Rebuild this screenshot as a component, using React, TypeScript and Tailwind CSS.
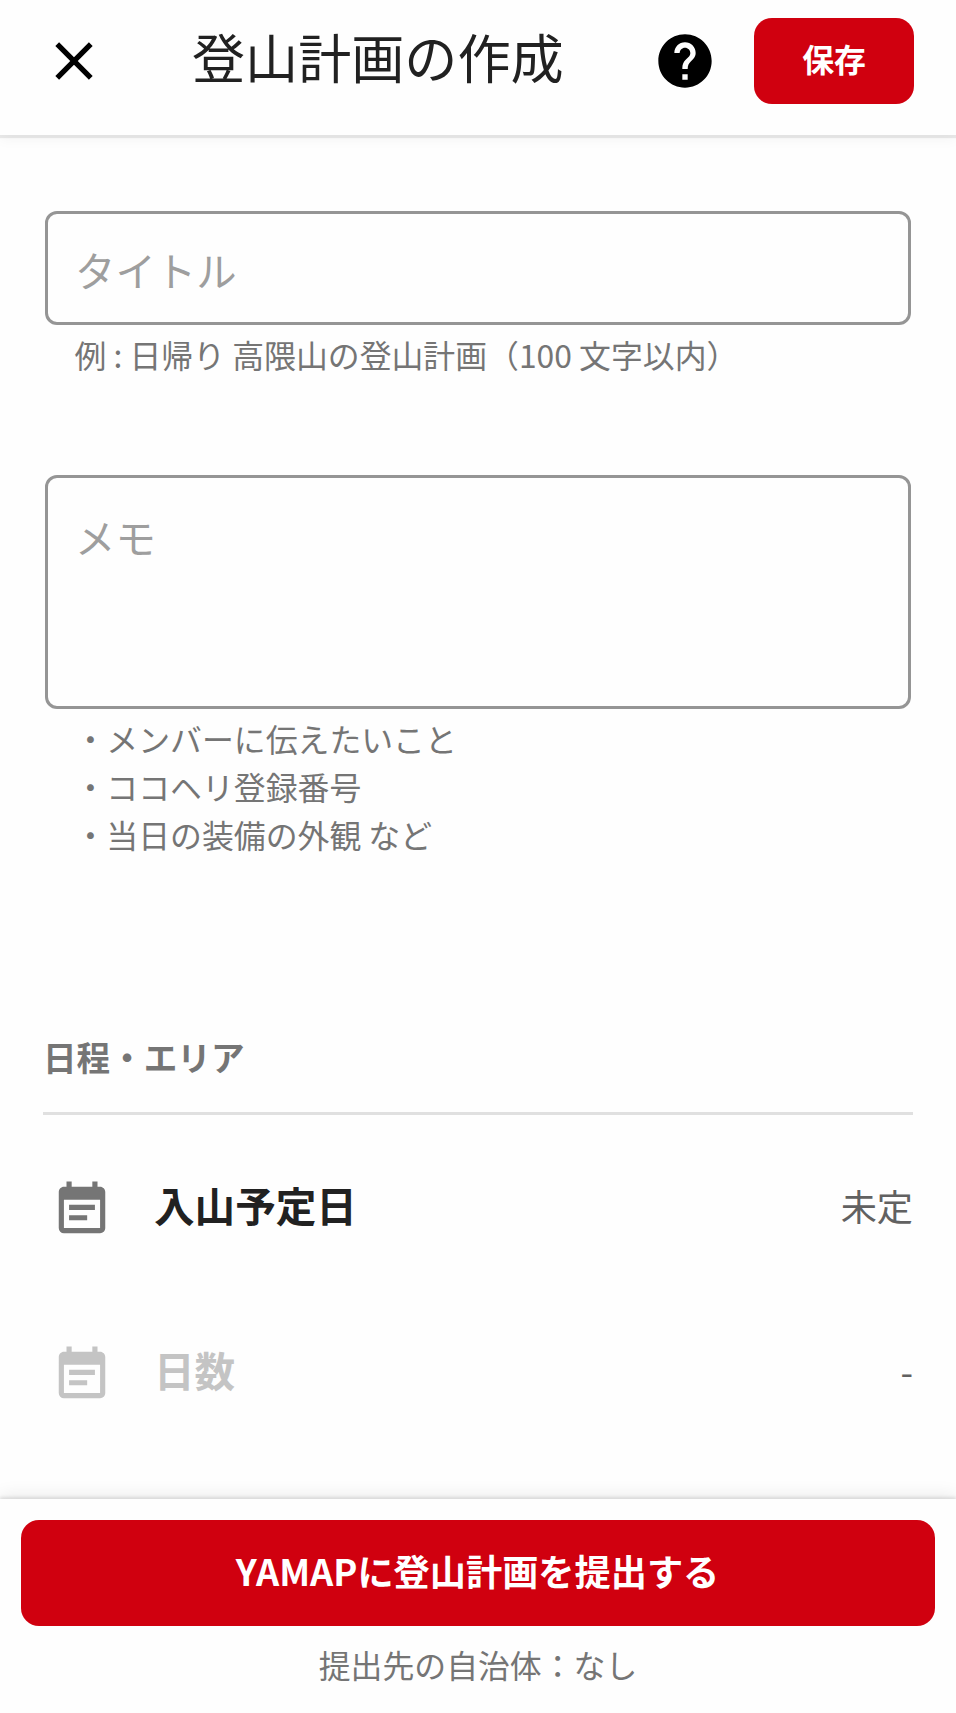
import React, { useState } from "react";
import { MdClose, MdEventNote, MdHelp } from "react-icons/md";

interface ScheduleRowProps {
  label: string;
  value: string;
  disabled?: boolean;
}

const ScheduleRow = ({ label, value, disabled }: ScheduleRowProps) => {
  return (
    <li className="flex h-[165px] items-center pl-[8px]">
      <MdEventNote
        className={
          disabled ? "size-[62px] text-[#c4c4c4]" : "size-[62px] text-[#757575]"
        }
      />
      <span
        className={
          disabled
            ? "ml-[41px] pb-[9px] text-[40.6px] leading-[60px] font-bold text-[#c4c4c4]"
            : "ml-[41px] pb-[9px] text-[40.6px] leading-[60px] font-bold text-[#212121]"
        }
      >
        {label}
      </span>
      <span className="ml-auto pb-[10px] text-[36.2px] leading-[54px] text-[#616161]">
        {value}
      </span>
    </li>
  );
};

const notes = [
  "・メンバーに伝えたいこと",
  "・ココヘリ登録番号",
  "・当日の装備の外観 など",
];

export default function App() {
  const [title, setTitle] = useState("");
  const [memo, setMemo] = useState("");

  return (
    <div className="flex h-[1713px] w-[956px] flex-col overflow-hidden bg-[#fefefe] font-['Noto_Sans_CJK_JP',sans-serif]">
      <header className="z-10 flex h-[135px] shrink-0 items-start bg-[#fefefe] pt-[18px] pr-[42px] pl-[42px] shadow-[0_3px_1px_rgba(0,0,0,0.08),0_5px_12px_rgba(0,0,0,0.04)]">
        <button aria-label="閉じる" className="mt-[11px]">
          <MdClose className="size-[64px] text-black" />
        </button>
        <h1 className="mt-[1px] ml-[86px] text-[53.1px] leading-[74px] text-[#212121]">
          登山計画の作成
        </h1>
        <button aria-label="ヘルプ" className="mt-[11px] ml-auto">
          <MdHelp className="size-[64px] text-black" />
        </button>
        <button className="ml-[37px] h-[86px] w-[160px] rounded-[18px] bg-[#d0000f] pb-[7px] text-[31.87px] leading-[48px] font-bold text-white">
          保存
        </button>
      </header>

      <main className="flex-1 overflow-hidden px-[43px] pt-[76px]">
        <div className="mx-[2px]">
          <input
            value={title}
            onChange={(e) => setTitle(e.target.value)}
            placeholder="タイトル"
            className="block h-[114px] w-full rounded-[12px] border-3 border-[#959595] px-[27px] pt-[2px] text-[40.4px] outline-none placeholder:text-[#9e9e9e]"
          />
          <p className="mt-[5px] pl-[29.5px] text-[31.87px] leading-[48px] text-[#757575]">
            例 : 日帰り 高隈山の登山計画（100 文字以内）
          </p>
        </div>

        <div className="mx-[2px] mt-[97px]">
          <textarea
            value={memo}
            onChange={(e) => setMemo(e.target.value)}
            placeholder="メモ"
            className="block h-[234px] w-full resize-none rounded-[12px] border-3 border-[#959595] px-[27px] pt-[29px] text-[40.4px] leading-[60px] outline-none placeholder:text-[#9e9e9e]"
          />
          <ul className="mt-[6px] pl-[29.5px] text-[31.87px] leading-[47.8px] text-[#757575]">
            {notes.map((note) => (
              <li key={note}>{note}</li>
            ))}
          </ul>
        </div>

        <section className="mt-[174px]">
          <h2 className="border-b-3 border-[#e0e0e0] pb-[30px] text-[33.6px] leading-[50px] font-bold text-[#757575]">
            日程・エリア
          </h2>
          <ul className="pt-[12px]">
            <ScheduleRow label="入山予定日" value="未定" />
            <ScheduleRow label="日数" value="-" disabled />
          </ul>
        </section>
      </main>

      <footer className="z-10 flex h-[214px] shrink-0 flex-col items-center bg-[#fefefe] px-[21px] pt-[21px] shadow-[0_-2px_3px_rgba(0,0,0,0.1),0_-4px_16px_rgba(0,0,0,0.08)]">
        <button className="h-[106px] w-full rounded-[18px] bg-[#d0000f] pr-[1px] pb-[6px] text-[36.2px] leading-[54px] font-bold text-white">
          YAMAPに登山計画を提出する
        </button>
        <p className="mt-[14px] text-[31.87px] leading-[48px] text-[#757575]">
          提出先の自治体：なし
        </p>
      </footer>
    </div>
  );
}
